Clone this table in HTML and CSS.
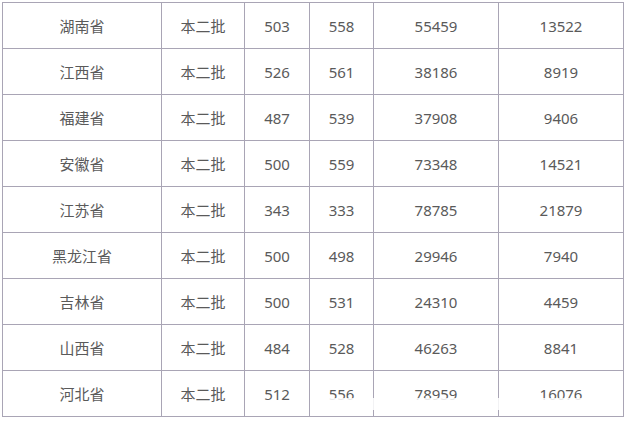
FILE: index.html
```html
<!DOCTYPE html>
<html lang="zh">
<head>
<meta charset="utf-8">
<link rel="stylesheet" href="styles.css">
</head>
<body>
<div class="wrap">
<table class="scores">
<colgroup>
<col class="c1"><col class="c2"><col class="c3"><col class="c4"><col class="c5"><col class="c6">
</colgroup>
<tbody>
<tr><td>湖南省</td><td>本二批</td><td>503</td><td>558</td><td>55459</td><td>13522</td></tr>
<tr><td>江西省</td><td>本二批</td><td>526</td><td>561</td><td>38186</td><td>8919</td></tr>
<tr><td>福建省</td><td>本二批</td><td>487</td><td>539</td><td>37908</td><td>9406</td></tr>
<tr><td>安徽省</td><td>本二批</td><td>500</td><td>559</td><td>73348</td><td>14521</td></tr>
<tr><td>江苏省</td><td>本二批</td><td>343</td><td>333</td><td>78785</td><td>21879</td></tr>
<tr><td>黑龙江省</td><td>本二批</td><td>500</td><td>498</td><td>29946</td><td>7940</td></tr>
<tr><td>吉林省</td><td>本二批</td><td>500</td><td>531</td><td>24310</td><td>4459</td></tr>
<tr><td>山西省</td><td>本二批</td><td>484</td><td>528</td><td>46263</td><td>8841</td></tr>
<tr><td>河北省</td><td>本二批</td><td>512</td><td>556</td><td>78959</td><td>16076</td></tr>
</tbody>
</table>
<div class="watermark"></div>
</div>
</body>
</html>
```

FILE: styles.css
```css
html, body {
  margin: 0;
  padding: 0;
  background: #ffffff;
}
body {
  padding: 2px 0 0 2px;
  font-family: "Noto Sans", "Noto Sans CJK SC", sans-serif;
  font-size: 15px;
  color: #5a5a5a;
}
.wrap {
  position: relative;
  width: 621px;
}
.scores {
  border-collapse: collapse;
  table-layout: fixed;
  width: 621px;
}
.scores td {
  border: 1px solid #a9a5b5;
  height: 45px;
  padding: 0;
  text-align: center;
  vertical-align: middle;
  line-height: 20px;
  white-space: nowrap;
}
.c1 { width: 159px; }
.c2 { width: 83px; }
.c3 { width: 65px; }
.c4 { width: 64px; }
.c5 { width: 125px; }
.c6 { width: 125px; }
.watermark {
  position: absolute;
  left: 326px;
  top: 396px;
  width: 270px;
  height: 12px;
  background: rgba(255, 255, 255, 0.85);
}
```
